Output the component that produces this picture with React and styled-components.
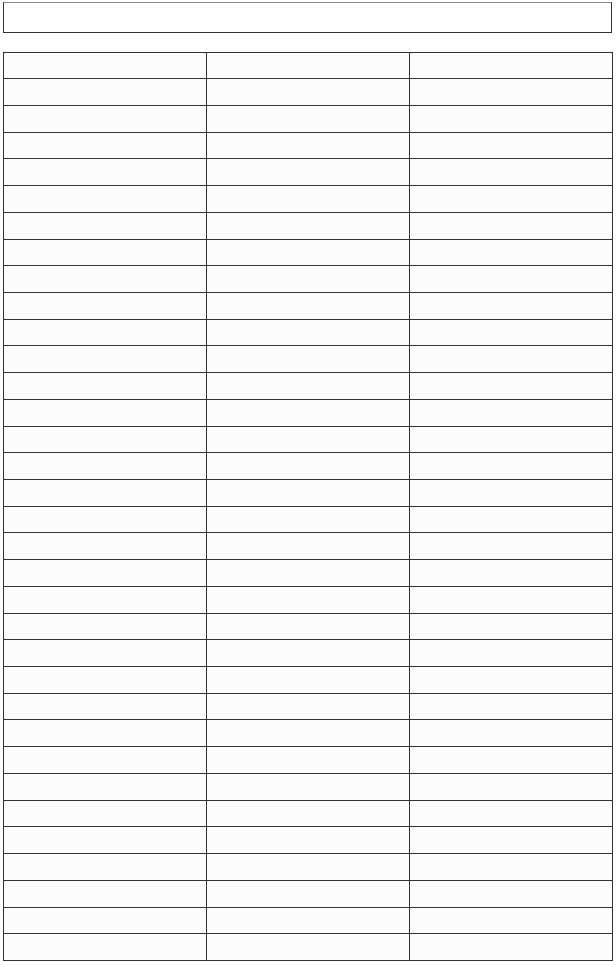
import React from 'react';
import styled, { createGlobalStyle } from 'styled-components';

const GlobalStyle = createGlobalStyle`
  html, body {
    margin: 0;
    padding: 0;
    background: #ffffff;
    font-family: "Liberation Sans", Arial, sans-serif;
  }
`;

const Page = styled.div`
  display: flex;
  flex-direction: column;
  gap: 19px;
  padding: 1.5px 3px 0 3px;
  width: 610px;
`;

const SearchBox = styled.input`
  box-sizing: border-box;
  width: 609px;
  height: 31px;
  margin: 0;
  padding: 0 6px;
  border: 1px solid #333333;
  border-top-color: #8a8a8a;
  background: #ffffff;
  font: 14px "Liberation Sans", Arial, sans-serif;
  outline: none;
`;

const Grid = styled.table`
  width: 610px;
  border-collapse: collapse;
  table-layout: fixed;
  border-top: 1px solid #8a8a8a;
`;

const Cell = styled.td`
  height: 25.72px;
  padding: 0;
  border: 1px solid #333333;
  background: #fcfcfc;
  font-size: 13px;
`;

const rows = Array.from({ length: 34 }, (_, i) => i);
const cols = [0, 1, 2];

export default function App() {
  return (
    <>
      <GlobalStyle />
      <Page>
        <SearchBox type="text" aria-label="search" />
        <Grid>
          <tbody>
            {rows.map(r => (
              <tr key={r}>
                {cols.map(c => (
                  <Cell key={c} />
                ))}
              </tr>
            ))}
          </tbody>
        </Grid>
      </Page>
    </>
  );
}
